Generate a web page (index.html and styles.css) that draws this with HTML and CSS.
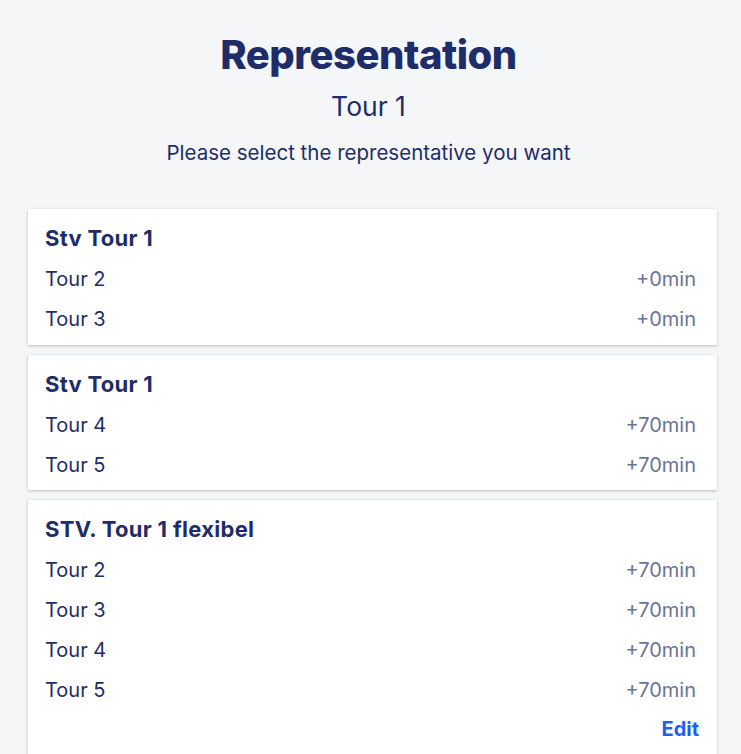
FILE: index.html
```html
<!DOCTYPE html>
<html>
<head>
<meta charset="utf-8">
<link rel="stylesheet" href="styles.css">
</head>
<body>
<header class="header">
  <h1 class="title">Representation</h1>
  <div class="subtitle">Tour 1</div>
  <p class="hint">Please select the representative you want</p>
</header>
<div class="list">
  <div class="card">
    <div class="card-title">Stv Tour 1</div>
    <div class="row"><span>Tour 2</span><span class="time">+0min</span></div>
    <div class="row"><span>Tour 3</span><span class="time">+0min</span></div>
  </div>
  <div class="card">
    <div class="card-title">Stv Tour 1</div>
    <div class="row"><span>Tour 4</span><span class="time">+70min</span></div>
    <div class="row"><span>Tour 5</span><span class="time">+70min</span></div>
  </div>
  <div class="card">
    <div class="card-title">STV. Tour 1 flexibel</div>
    <div class="row"><span>Tour 2</span><span class="time">+70min</span></div>
    <div class="row"><span>Tour 3</span><span class="time">+70min</span></div>
    <div class="row"><span>Tour 4</span><span class="time">+70min</span></div>
    <div class="row"><span>Tour 5</span><span class="time">+70min</span></div>
    <div class="actions"><a class="edit">Edit</a></div>
  </div>
</div>
</body>
</html>
```
FILE: styles.css
```css
html, body {
  margin: 0;
  padding: 0;
  background: #f5f6f8;
  font-family: Inter, "Noto Sans", sans-serif;
  color: #1e2d69;
  height: 754px;
  overflow: hidden;
}
.header {
  text-align: center;
  padding: 31px 4px 0 0;
}
.title {
  margin: 0;
  font-size: 40px;
  font-weight: 800;
  line-height: 48px;
  color: #1e2d69;
  letter-spacing: -0.5px;
}
.subtitle {
  margin-top: 12px;
  font-size: 26.5px;
  line-height: 30px;
}
.hint {
  margin: 19px 0 0;
  font-size: 20.5px;
  line-height: 26px;
}
.list {
  margin: 43px 24px 0 28px;
  display: flex;
  flex-direction: column;
  gap: 10px;
}
.card {
  background: #fff;
  box-shadow: 0 1px 3px rgba(0, 0, 0, 0.22), 0 0 1px rgba(0, 0, 0, 0.06);
  padding: 13px 21px 5.5px 17px;
}
.card-title {
  font-size: 22px;
  font-weight: 700;
  line-height: 32px;
  margin-bottom: 5px;
  letter-spacing: 0.3px;
}
.row {
  display: flex;
  justify-content: space-between;
  align-items: center;
  height: 40px;
  font-size: 20px;
}
.time {
  color: #6a7499;
}
.actions {
  display: flex;
  justify-content: flex-end;
  padding: 2px 0 20px;
  margin-right: -3px;
}
.edit {
  color: #1d5ff5;
  font-weight: 700;
  font-size: 20px;
  line-height: 34px;
}
```
